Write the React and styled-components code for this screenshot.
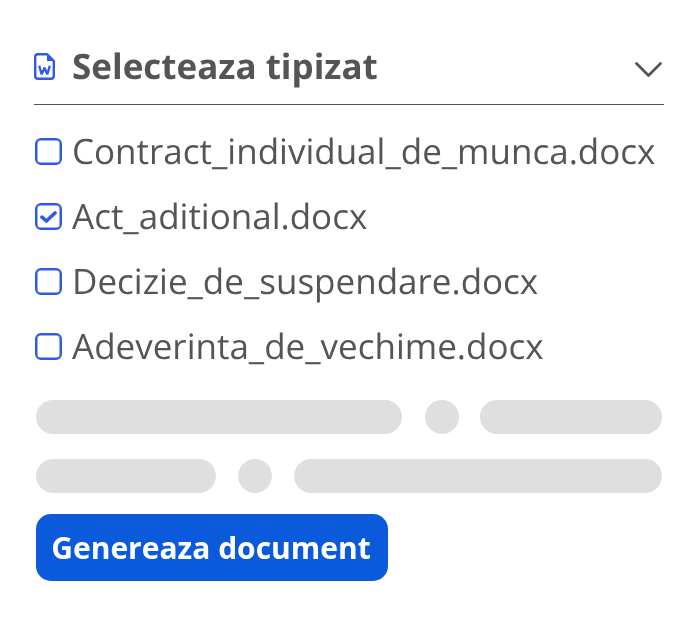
import React from 'react';
import styled, { createGlobalStyle } from 'styled-components';

const Global = createGlobalStyle`
  html, body { margin: 0; padding: 0; background: #fff; }
  body { font-family: 'Open Sans', sans-serif; text-rendering: geometricPrecision; }
`;

const Panel = styled.div`
  width: 630px;
  padding: 40px 0 0 34px;
  will-change: transform;
`;

const Header = styled.div`
  display: flex;
  align-items: center;
  height: 65px;
  padding-bottom: 11px;
  box-sizing: border-box;
  border-bottom: 1px solid #555;
`;

const Title = styled.div`
  flex: 1;
  margin-left: 17px;
  font-size: 35px;
  font-weight: 700;
  color: #555;
  line-height: 54px;
`;

const List = styled.div`
  display: flex;
  flex-direction: column;
  margin-top: 14px;
`;

const Row = styled.label`
  display: flex;
  align-items: center;
  height: 65px;
  font-size: 35px;
  color: #555;
`;

const Box = styled.span`
  box-sizing: border-box;
  display: flex;
  flex-shrink: 0;
  align-items: center;
  justify-content: center;
  width: 27px;
  height: 27px;
  margin: 0 10px 0 1px;
  border: 2px solid #2f5ae6;
  border-radius: 6px;
  box-shadow: inset 0 0 0 0.5px #2f5ae6;
`;

const Skeletons = styled.div`
  display: flex;
  flex-direction: column;
  gap: 25px;
  margin: 21px 0 0 2px;
  width: 626px;
`;

const SkeletonRow = styled.div`
  display: flex;
`;

const Bar = styled.div`
  height: 34px;
  width: ${p => p.$w}px;
  margin-left: ${p => p.$ml || 0}px;
  border-radius: 17px;
  background: #dfdfdf;
`;

const Button = styled.button`
  display: block;
  box-sizing: border-box;
  width: 352px;
  height: 67px;
  margin: 21px 0 0 2px;
  padding: 0 2px 0 0;
  border: 0;
  border-radius: 15px;
  background: #0a5adb;
  color: #fff;
  font-family: 'Open Sans', sans-serif;
  font-size: 30px;
  font-weight: 700;
`;

const IconWrap = styled.svg`
  flex-shrink: 0;
  margin-top: -1px;
`;

const ChevronWrap = styled.svg`
  margin: 5px 2px 0 0;
`;

const DocIcon = () => (
  <IconWrap width="21" height="27" viewBox="0 0 21 27" fill="none">
    <path d="M3.8 1.2h9.2L19.8 8V23a2.9 2.9 0 0 1-2.9 2.8H4A2.9 2.9 0 0 1 1.2 23V3.8A2.7 2.7 0 0 1 3.8 1.2Z" stroke="#2f5ae6" strokeWidth="2.4" strokeLinejoin="round" />
    <path d="M13 1.5V8H19.5Z" fill="#2f5ae6" />
    <path d="M5.2 12.8l2.5 8.6 2.8-6.6 2.8 6.6 2.5-8.6" stroke="#2f5ae6" strokeWidth="2.3" strokeLinejoin="bevel" />
  </IconWrap>
);

const Chevron = () => (
  <ChevronWrap width="27" height="15" viewBox="0 0 27 15" fill="none">
    <path d="M1.5 1.5L13.5 13.5L25.5 1.5" stroke="#555" strokeWidth="2.8" strokeLinecap="round" strokeLinejoin="round" />
  </ChevronWrap>
);

const Check = () => (
  <svg width="17" height="12" viewBox="0 0 17 12" fill="none">
    <path d="M2 6.2L6.4 10L15 2" stroke="#2f5ae6" strokeWidth="3.6" strokeLinecap="round" strokeLinejoin="round" />
  </svg>
);

const files = [
  { name: 'Contract_individual_de_munca.docx' },
  { name: 'Act_aditional.docx', checked: true },
  { name: 'Decizie_de_suspendare.docx' },
  { name: 'Adeverinta_de_vechime.docx' },
];

export default function App() {
  return (
    <Panel>
      <Global />
      <Header>
        <DocIcon />
        <Title>Selecteaza tipizat</Title>
        <Chevron />
      </Header>
      <List>
        {files.map(f => (
          <Row key={f.name}>
            <Box>{f.checked && <Check />}</Box>
            {f.name}
          </Row>
        ))}
      </List>
      <Skeletons>
        <SkeletonRow>
          <Bar $w={366} />
          <Bar $w={34} $ml={23} />
          <Bar $w={182} $ml={21} />
        </SkeletonRow>
        <SkeletonRow>
          <Bar $w={180} />
          <Bar $w={34} $ml={22} />
          <Bar $w={368} $ml={22} />
        </SkeletonRow>
      </Skeletons>
      <Button>Genereaza document</Button>
    </Panel>
  );
}
